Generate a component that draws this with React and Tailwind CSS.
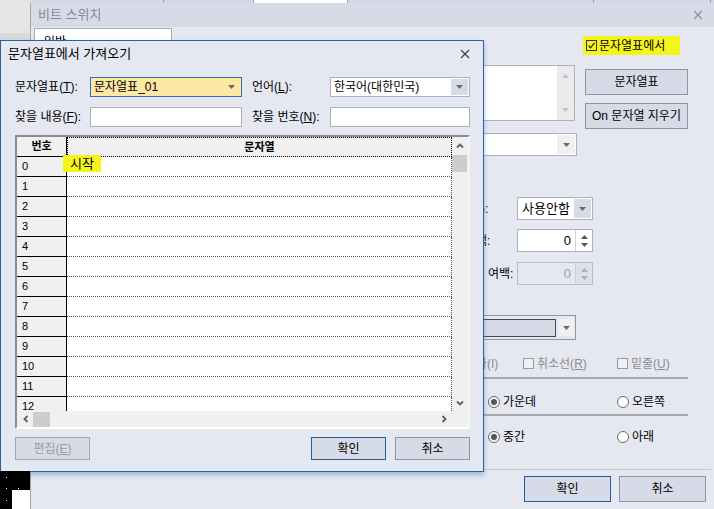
import React from 'react'

function Tri({ up, color = '#6b6b6b' }) {
  return (
    <svg width="7" height="4" viewBox="0 0 7 4">
      <path d={up ? 'M0 4h7L3.5 0z' : 'M0 0h7L3.5 4z'} fill={color} />
    </svg>
  )
}

function Chev({ dir }) {
  const d = {
    up: 'M1 5.5L4 2.5L7 5.5',
    down: 'M1 2.5L4 5.5L7 2.5',
    left: 'M5.5 1L2.5 4L5.5 7',
    right: 'M2.5 1L5.5 4L2.5 7',
  }[dir]
  return (
    <svg width="8" height="8" viewBox="0 0 8 8">
      <path d={d} fill="none" stroke="#5f5f5f" strokeWidth="1.8" />
    </svg>
  )
}

function Close({ color }) {
  return (
    <svg width="10" height="10" viewBox="0 0 10 10">
      <path d="M1 1L9 9M9 1L1 9" stroke={color} strokeWidth="1.2" />
    </svg>
  )
}

function CheckBox({ checked, disabled }) {
  return (
    <span className={`w-[11px] h-[11px] shrink-0 border flex items-center justify-center ${disabled ? 'border-[#9a9a9a] bg-[#eef0f5]' : 'border-[#333] bg-transparent'}`}>
      {checked && (
        <svg width="9" height="9" viewBox="0 0 9 9">
          <path d="M1.5 4.5L3.5 6.8L7.5 1.8" fill="none" stroke="#222" strokeWidth="1.2" />
        </svg>
      )}
    </span>
  )
}

function Radio({ checked }) {
  return (
    <span className={`w-[12px] h-[12px] shrink-0 rounded-full border flex items-center justify-center ${checked ? 'border-[#6a6a6a] bg-[#f4f4f4]' : 'border-[#6a6a6a] bg-white'}`}>
      {checked && <span className="w-[6px] h-[6px] rounded-full bg-[#555]" />}
    </span>
  )
}

function Btn({ children, primary, disabled, className = '' }) {
  return (
    <div className={`flex items-center justify-center bg-[#d6dbe7] border text-[12px] ${primary ? 'border-[#1f5d9e]' : 'border-[#8e95a3]'} ${disabled ? 'text-[#9a9ea6] border-[#a2a8b3]' : 'text-black'} ${className}`}>
      {children}
    </div>
  )
}

function Dialog() {
  const rows = Array.from({ length: 13 }, (_, i) => i)
  return (
    <div className="absolute left-0 top-[40px] w-[484px] h-[432px] bg-[#e5e8f1] border border-[#2463a3] shadow-[0_3px_5px_rgba(70,120,180,0.45)] flex flex-col">
      <div className="h-[25px] shrink-0 flex items-center justify-between pl-[7px] pr-[13px]">
        <span className="text-[13px] text-black leading-none">문자열표에서 가져오기</span>
        <Close color="#404040" />
      </div>

      <div className="flex flex-col pl-[14px] pr-[13px] pt-[11px] text-[12px] text-black">
        <div className="flex items-center h-[20px]">
          <span className="w-[75px]">문자열표(<u>T</u>):</span>
          <div className="w-[152px] h-[20px] border border-[#2f6fb3] bg-[#ffe7a4] flex items-center justify-between pl-[3px] pr-[6px]">
            <span>문자열표_01</span>
            <Tri />
          </div>
          <span className="w-[78px] ml-[10px]">언어(<u>L</u>):</span>
          <div className="w-[140px] h-[20px] border border-[#abb1bd] bg-white flex items-center justify-between pl-[3px] p-[1px]">
            <span>한국어(대한민국)</span>
            <div className="w-[17px] h-full bg-[#d6dbe7] flex items-center justify-center">
              <Tri />
            </div>
          </div>
        </div>

        <div className="flex items-center h-[20px] mt-[10px]">
          <span className="w-[75px]">찾을 내용(<u>F</u>):</span>
          <div className="w-[152px] h-[20px] border border-[#abb1bd] bg-white" />
          <span className="w-[78px] ml-[10px]">찾을 번호(<u>N</u>):</span>
          <div className="w-[140px] h-[20px] border border-[#abb1bd] bg-white" />
        </div>

        <div className="mt-[8px] w-[455px] h-[294px] border-t-2 border-l-2 border-[#8c8c8c] border-r-2 border-r-[#f4f4f4] border-b-2 border-b-white flex flex-col">
          <div className="flex h-[274px] overflow-hidden">
            <div className="w-[435px] flex flex-col overflow-hidden">
              <div className="flex h-[20px] shrink-0">
                <div className="w-[50px] bg-[#f0f0f0] border-r border-b border-black flex items-center justify-center text-[11px] font-bold">번호</div>
                <div className="w-[385px] bg-[#f0f0f0] border border-dotted border-black flex items-center justify-center text-[11px] font-bold">문자열</div>
              </div>
              {rows.map(i => (
                <div key={i} className="flex h-[20px] shrink-0">
                  <div className="w-[50px] bg-[#f0f0f0] border-r border-b border-black pl-[5px] flex items-center text-[11px]">{i}</div>
                  <div className="w-[385px] bg-white border-r border-b border-dotted border-[#555] flex items-start">
                    {i === 0 && (
                      <span className="relative -ml-[4px] -mt-[2px] h-[17px] w-[38px] bg-[#f5f51e] pl-[7px] text-[13px] leading-[18px]">시작</span>
                    )}
                  </div>
                </div>
              ))}
            </div>
            <div className="w-[16px] bg-[#f0f0f0] flex flex-col">
              <div className="h-[18px] flex items-center justify-center"><Chev dir="up" /></div>
              <div className="w-[15px] h-[17px] bg-[#cdcdcd]" />
              <div className="flex-1" />
              <div className="h-[16px] flex items-center justify-center"><Chev dir="down" /></div>
            </div>
          </div>
          <div className="h-[16px] bg-[#f0f0f0] flex items-center">
            <div className="w-[15px] flex justify-center pl-[2px]"><Chev dir="left" /></div>
            <div className="w-[17px] h-[15px] bg-[#cdcdcd] ml-[1px]" />
            <div className="flex-1" />
            <div className="w-[16px] flex justify-center"><Chev dir="right" /></div>
            <div className="w-[16px]" />
          </div>
        </div>

        <div className="flex mt-[8px]">
          <Btn disabled className="w-[75px] h-[23px]">편집(<u>E</u>)</Btn>
          <Btn primary className="w-[75px] h-[23px] ml-auto">확인</Btn>
          <Btn className="w-[75px] h-[23px] ml-[9px]">취소</Btn>
        </div>
      </div>
    </div>
  )
}

function BackWindow() {
  return (
    <div className="absolute left-[30px] top-[3px] w-[684px] h-[506px] bg-[#e5e8f1] border-l border-[#9ea6b4] flex flex-col">
      <div className="h-[24px] shrink-0 bg-[#d6dbe7] flex items-center justify-between pl-[7px] pr-[11px]">
        <span className="text-[13px] text-[#858a94]">비트 스위치</span>
        <Close color="#8a8f99" />
      </div>
      <div className="flex flex-1">
        <div className="w-[449px] shrink-0 pl-[3px] pt-[1px]">
          {/* tab panel, only its top shows above the dialog */}
          <div className="h-[12px] overflow-hidden">
            <div className="w-[138px] h-[40px] bg-white border border-[#a5acb9] pl-[9px] pt-[4px] text-[12px]">일반</div>
          </div>
        </div>

        <div className="flex-1 flex flex-col text-[12px] text-black">
          <div className="mt-[9px] ml-[103px] w-[97px] h-[19px] bg-[#f5f51e] flex items-center pl-[3px] gap-[2px]">
            <CheckBox checked />
            <span>문자열표에서</span>
          </div>

          <div className="flex items-start mt-[10px]">
            <div className="w-[95px] h-[56px] border border-[#abb1bd] bg-white flex justify-end">
              <div className="w-[17px] h-full bg-[#ebebeb] flex flex-col items-center justify-between py-[8px]">
                <Tri up color="#c2c2c2" />
                <Tri color="#c2c2c2" />
              </div>
            </div>
            <div className="ml-[10px] mt-[4px] flex flex-col gap-[8px]">
              <Btn className="w-[103px] h-[26px]">문자열표</Btn>
              <Btn className="w-[103px] h-[26px]">On 문자열 지우기</Btn>
            </div>
          </div>

          <div className="mt-[4px] w-[97px] h-[23px] border border-[#abb1bd] bg-white flex justify-end p-[1px]">
            <div className="w-[18px] h-full bg-[#f0f0f0] flex items-center justify-center"><Tri /></div>
          </div>

          <div className="mt-[41px] flex items-center h-[23px]">
            <div className="w-[37px]"><span className="ml-[1px]">):</span></div>
            <div className="w-[76px] h-[23px] border border-[#abb1bd] bg-white flex items-center justify-between pl-[4px] p-[1px]">
              <span className="text-[13px]">사용안함</span>
              <div className="w-[17px] h-full bg-[#d6dbe7] flex items-center justify-center"><Tri /></div>
            </div>
          </div>

          <div className="mt-[9px] flex items-center h-[23px]">
            <div className="w-[37px]"><span className="-ml-[4px]">백:</span></div>
            <div className="w-[76px] h-[23px] border border-[#abb1bd] bg-white flex items-center">
              <span className="flex-1 text-right pr-[4px] text-[13px]">0</span>
              <div className="w-[17px] h-full border-l border-[#d0d4dc] flex flex-col items-center justify-center gap-[4px]">
                <Tri up color="#555" />
                <Tri color="#555" />
              </div>
            </div>
          </div>

          <div className="mt-[10px] flex items-center h-[23px]">
            <div className="w-[37px] pl-[8px]">여백:</div>
            <div className="w-[76px] h-[23px] border border-[#b8bec9] bg-[#e5e8f1] flex items-center">
              <span className="flex-1 text-right pr-[4px] text-[13px] text-[#a0a0a0]">0</span>
              <div className="w-[17px] h-full border-l border-[#c9ced8] bg-[#dde1ea] flex flex-col items-center justify-center gap-[4px]">
                <Tri up color="#b0b0b0" />
                <Tri color="#b0b0b0" />
              </div>
            </div>
          </div>

          <div className="mt-[30px] w-[96px] h-[25px] border border-[#8e95a3] bg-[#e5e8f1] flex items-center">
            <div className="w-[75px] h-[18px] bg-[#d6dbe7] border border-[#4a4a4a]" />
            <div className="ml-[3px] w-[15px] h-[17px] bg-[#f0f0f0] flex items-center justify-center"><Tri /></div>
          </div>

          <div className="mt-[17px] flex items-center h-[13px] text-[#8d8d8d]">
            <div className="w-[43px]"><span className="-ml-[4px] whitespace-nowrap">가(I)</span></div>
            <div className="w-[94px] flex items-center gap-[3px]">
              <CheckBox disabled />
              <span>취소선(<u>R</u>)</span>
            </div>
            <div className="flex items-center gap-[3px]">
              <CheckBox disabled />
              <span>밑줄(<u>U</u>)</span>
            </div>
          </div>

          <div className="mt-[7px] w-[208px] h-[2px] bg-[#a9a9a9]" />

          <div className="mt-[16px] flex items-center h-[14px]">
            <div className="w-[137px] pl-[8px] flex items-center gap-[3px]">
              <Radio checked />
              <span>가운데</span>
            </div>
            <div className="flex items-center gap-[3px]">
              <Radio />
              <span>오른쪽</span>
            </div>
          </div>

          <div className="mt-[5px] w-[208px] h-[2px] bg-[#a9a9a9]" />

          <div className="mt-[14px] flex items-center h-[14px]">
            <div className="w-[137px] pl-[8px] flex items-center gap-[3px]">
              <Radio checked />
              <span>중간</span>
            </div>
            <div className="flex items-center gap-[3px]">
              <Radio />
              <span>아래</span>
            </div>
          </div>

          <div className="mt-[25px] w-[231px] h-[1px] bg-[#c4c8d1]" />

          <div className="mt-[6px] ml-[44px] flex gap-[8px]">
            <Btn primary className="w-[87px] h-[26px]">확인</Btn>
            <Btn className="w-[87px] h-[26px]">취소</Btn>
          </div>
        </div>
      </div>
    </div>
  )
}

export default function App() {
  return (
    <div className="relative w-[714px] h-[509px] overflow-hidden bg-[#e6e6e6] font-['Liberation_Sans','Noto_Sans_CJK_KR',sans-serif]">
      <div className="absolute left-0 top-[33px] w-[30px] h-[8px] bg-[#d9d9d9]" />

      <div className="absolute left-[30px] top-0 w-[684px] h-[3px] bg-[#d3d8e4] flex">
        <div className="ml-[133px] w-[1px] bg-[#9ea6b4]" />
        <div className="ml-[89px] w-[95px] bg-white border-x border-[#9ea6b4]" />
        <div className="ml-[245px] w-[1px] bg-[#9ea6b4]" />
        <div className="ml-[116px] w-[1px] bg-[#9ea6b4]" />
      </div>

      <BackWindow />
      <Dialog />

      <div className="absolute left-0 top-[471px] w-[30px] h-[38px] bg-black">
        <div className="absolute left-[6px] top-[6px] w-[1px] h-[1px] bg-white" />
        <div className="absolute left-[6px] top-[17px] w-[1px] h-[1px] bg-white" />
        <div className="absolute left-[18px] top-[17px] w-[1px] h-[1px] bg-white" />
        <div className="absolute left-[6px] top-[29px] w-[1px] h-[1px] bg-white" />
        <div className="absolute left-[12px] top-[19px] w-[18px] h-[19px] bg-white" />
      </div>
    </div>
  )
}
